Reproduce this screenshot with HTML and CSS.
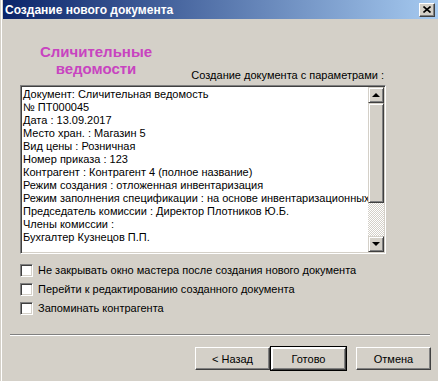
FILE: index.html
```html
<!DOCTYPE html>
<html lang="ru">
<head>
    <meta charset="UTF-8">
    <meta name="viewport" content="width=device-width, initial-scale=1.0">
    <title>Создание нового документа</title>
    <link rel="stylesheet" href="styles.css">
</head>
<body>
    <div class="window">
        <div class="titlebar">
            <span class="title">Создание нового документа</span>
            <button class="close" type="button">
                <svg width="8" height="7" viewBox="0 0 8 7"><path d="M0.5 0.5 L7.5 6.5 M7.5 0.5 L0.5 6.5" stroke="#000" stroke-width="1.6" fill="none"/></svg>
            </button>
        </div>

        <div class="content">
            <div class="top">
                <div class="heading">Сличительные<br>ведомости</div>
                <div class="caption">Создание документа с параметрами :</div>
            </div>

            <div class="memo">
                <div class="memo-text">
                    <div>Документ: Сличительная ведомость</div>
                    <div>№ ПТ000045</div>
                    <div>Дата : 13.09.2017</div>
                    <div>Место хран. : Магазин 5</div>
                    <div>Вид цены : Розничная</div>
                    <div>Номер приказа : 123</div>
                    <div>Контрагент : Контрагент 4 (полное название)</div>
                    <div>Режим создания : отложенная инвентаризация</div>
                    <div>Режим заполнения спецификации : на основе инвентаризационных данных</div>
                    <div>Председатель комиссии : Директор Плотников Ю.Б.</div>
                    <div>Члены комиссии :</div>
                    <div>Бухгалтер Кузнецов П.П.</div>
                </div>
                <div class="scrollbar">
                    <div class="raised sb-btn"><span class="arrow-up"></span></div>
                    <div class="raised sb-thumb"></div>
                    <div class="sb-track"></div>
                    <div class="raised sb-btn"><span class="arrow-down"></span></div>
                </div>
            </div>

            <div class="options">
                <label class="option"><span class="check"></span>Не закрывать окно мастера после создания нового документа</label>
                <label class="option"><span class="check"></span>Перейти к редактированию созданного документа</label>
                <label class="option"><span class="check"></span>Запоминать контрагента</label>
            </div>
        </div>

        <div class="separator"></div>

        <div class="buttons">
            <button class="raised btn" type="button">&lt; Назад</button>
            <button class="raised btn default" type="button">Готово</button>
            <button class="raised btn cancel" type="button">Отмена</button>
        </div>
    </div>
</body>
</html>
```

FILE: styles.css
```css
body { margin: 0; font-family: "Liberation Sans", Arial, sans-serif; font-size: 11px; color: #000; }
.window { width: 438px; height: 381px; box-sizing: border-box; padding-left: 3px; background: #d4d0c8; box-shadow: inset 1px 0 #d4d0c8, inset 2px 0 #fff; overflow: hidden; }

.titlebar { height: 19px; display: flex; align-items: center; justify-content: space-between; padding: 0 3px 0 2px; background: linear-gradient(to right, #0a246a, #a6caf0); }
.title { color: #fff; font-weight: bold; font-size: 12px; }
.close { width: 16px; height: 14px; padding: 0; display: flex; align-items: center; justify-content: center; background: #d4d0c8; border: 1px solid; border-color: #fff #404040 #404040 #fff; box-shadow: inset -1px -1px #808080; }

.content { padding-left: 17px; }
.top { width: 366px; height: 66px; display: flex; justify-content: space-between; align-items: flex-end; }
.heading { align-self: flex-start; width: 152px; margin-top: 24px; text-align: center; color: #c844c0; font-weight: bold; font-size: 15px; line-height: 17px; }
.caption { margin: 0 2px 3px 0; line-height: 13px; }

.memo { width: 366px; height: 169px; box-sizing: border-box; display: flex; background: #fff; border: 1px solid; border-color: #808080 #fff #fff #808080; box-shadow: inset 1px 1px #404040, inset -1px -1px #d4d0c8; padding: 1px; }
.memo-text { flex: 1; overflow: hidden; white-space: nowrap; padding: 1px 0 0 1px; line-height: 13px; }

.scrollbar { width: 16px; display: flex; flex-direction: column; }
.raised { box-sizing: border-box; background: #d4d0c8; border: 1px solid; border-color: #d4d0c8 #404040 #404040 #d4d0c8; box-shadow: inset 1px 1px #fff, inset -1px -1px #808080; }
.sb-btn { height: 16px; display: flex; align-items: center; justify-content: center; }
.sb-thumb { height: 100px; }
.sb-track { flex: 1; background: repeating-conic-gradient(#fff 0 25%, #d4d0c8 0 50%) 0 0 / 2px 2px; }
.arrow-up { width: 0; height: 0; border: 4px solid transparent; border-top: 0; border-bottom-color: #000; }
.arrow-down { width: 0; height: 0; border: 4px solid transparent; border-bottom: 0; border-top-color: #000; }

.options { margin-top: 10px; display: flex; flex-direction: column; gap: 6px; }
.option { display: flex; align-items: center; gap: 5px; line-height: 13px; }
.check { width: 13px; height: 13px; box-sizing: border-box; background: #fff; border: 1px solid; border-color: #808080 #fff #fff #808080; box-shadow: inset 1px 1px #404040, inset -1px -1px #d4d0c8; }

.separator { margin: 19px 8px 0 7px; height: 1px; border-top: 1px solid #808080; border-bottom: 1px solid #fff; height: 0; }

.buttons { display: flex; justify-content: flex-end; margin: 11px 7px 0 0; }
.btn { width: 75px; height: 23px; font-family: inherit; font-size: 11px; color: #000; padding: 0; }
.btn.default { margin-left: 1px; outline: 1px solid #000; outline-offset: 0; border-color: #fff #404040 #404040 #fff; }
.btn.cancel { margin-left: 10px; }
.btn:not(.default) { border-color: #fff #404040 #404040 #fff; box-shadow: inset -1px -1px #808080; }
```
